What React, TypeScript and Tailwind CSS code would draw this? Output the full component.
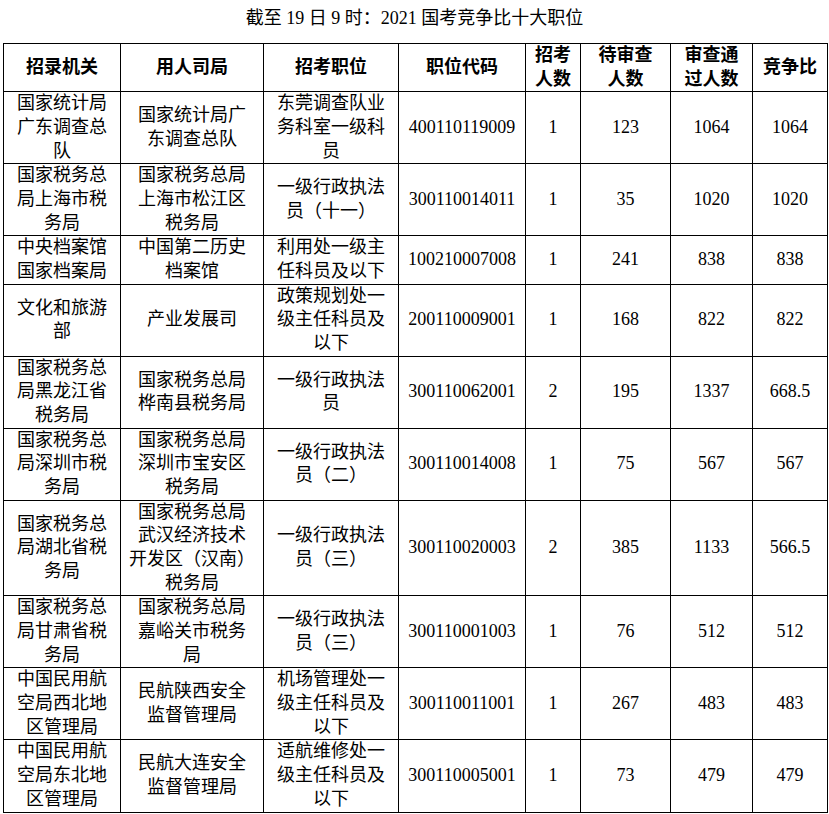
import React from "react";

const headers = ["招录机关", "用人司局", "招考职位", "职位代码", "招考/人数", "待审查/人数", "审查通/过人数", "竞争比"];

const rows: string[][] = [
  ["国家统计局/广东调查总/队", "国家统计局广/东调查总队", "东莞调查队业/务科室一级科/员", "400110119009", "1", "123", "1064", "1064"],
  ["国家税务总/局上海市税/务局", "国家税务总局/上海市松江区/税务局", "一级行政执法/员（十一）", "300110014011", "1", "35", "1020", "1020"],
  ["中央档案馆/国家档案局", "中国第二历史/档案馆", "利用处一级主/任科员及以下", "100210007008", "1", "241", "838", "838"],
  ["文化和旅游/部", "产业发展司", "政策规划处一/级主任科员及/以下", "200110009001", "1", "168", "822", "822"],
  ["国家税务总/局黑龙江省/税务局", "国家税务总局/桦南县税务局", "一级行政执法/员", "300110062001", "2", "195", "1337", "668.5"],
  ["国家税务总/局深圳市税/务局", "国家税务总局/深圳市宝安区/税务局", "一级行政执法/员（二）", "300110014008", "1", "75", "567", "567"],
  ["国家税务总/局湖北省税/务局", "国家税务总局/武汉经济技术/开发区（汉南）/税务局", "一级行政执法/员（三）", "300110020003", "2", "385", "1133", "566.5"],
  ["国家税务总/局甘肃省税/务局", "国家税务总局/嘉峪关市税务/局", "一级行政执法/员（三）", "300110001003", "1", "76", "512", "512"],
  ["中国民用航/空局西北地/区管理局", "民航陕西安全/监督管理局", "机场管理处一/级主任科员及/以下", "300110011001", "1", "267", "483", "483"],
  ["中国民用航/空局东北地/区管理局", "民航大连安全/监督管理局", "适航维修处一/级主任科员及/以下", "300110005001", "1", "73", "479", "479"],
];

const widths = [117, 143, 135, 127, 55, 90, 82, 75];

function Lines({ text }: { text: string }) {
  const parts = text.split("/");
  return (
    <>
      {parts.map((p, i) => (
        <React.Fragment key={i}>
          {i > 0 && <br />}
          {p}
        </React.Fragment>
      ))}
    </>
  );
}

export default function App() {
  return (
    <div className="w-[829px] h-[814px] bg-white text-black text-[18px] leading-[23.67px] [font-family:'Liberation_Serif','Noto_Sans_CJK_SC',serif]">
      <div className="h-[43px] pt-[6px] text-center leading-[24px]">截至 19 日 9 时：2021 国考竞争比十大职位</div>
      <table className="ml-[3px] w-[824px] table-fixed border-collapse">
        <colgroup>
          {widths.map((w, i) => (
            <col key={i} style={{ width: w }} />
          ))}
        </colgroup>
        <thead>
          <tr>
            {headers.map((h, i) => (
              <th key={i} className="border border-black p-0 text-center align-middle font-bold whitespace-nowrap">
                <Lines text={h} />
              </th>
            ))}
          </tr>
        </thead>
        <tbody>
          {rows.map((r, ri) => (
            <tr key={ri}>
              {r.map((c, ci) => (
                <td key={ci} className="border border-black p-0 text-center align-middle font-normal whitespace-nowrap">
                  <Lines text={c} />
                </td>
              ))}
            </tr>
          ))}
        </tbody>
      </table>
    </div>
  );
}
